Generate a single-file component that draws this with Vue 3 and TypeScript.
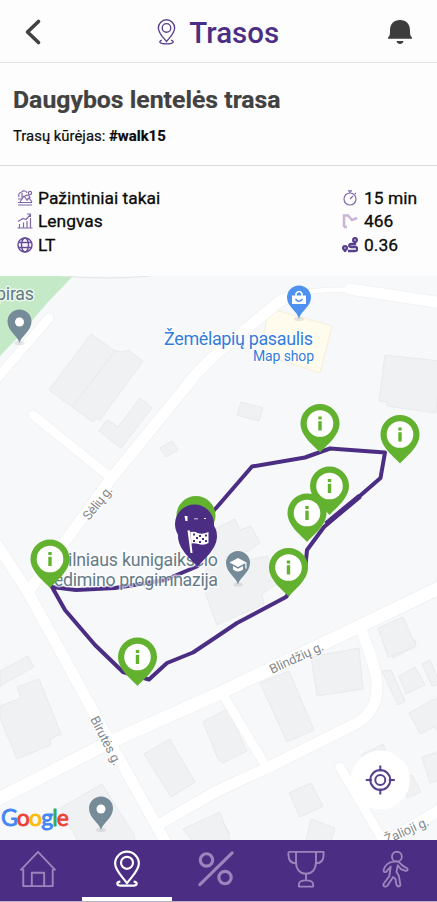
<script setup lang="ts">
interface Point { x: number; y: number }
interface Tab { name: string; active: boolean }

const stops: Point[] = [
  { x: 320, y: 452.5 },
  { x: 400, y: 463.5 },
  { x: 329.5, y: 515 },
  { x: 307, y: 542 },
  { x: 288.5, y: 596.5 },
  { x: 50, y: 588 },
  { x: 137.5, y: 686 },
]

const places: Point[] = [
  { x: 19.5, y: 343 },
  { x: 238, y: 584.5 },
  { x: 101, y: 830 },
]

const buildings: string[] = [
  '91,334 115,351 123,352 128,350 143,361 100,420 97,418 93,422 49,390',
  '140,398 152,408 121,448 99,431 107,420 118,427',
  '172,441 178,450 166,457 160,448',
  '241,402 263,408 259,421 237,415',
  '385,355 440,361 436,413 387,406 387,402 379,401',
  '0,706 21,698 17,687 39,679 61,734 50,739 51,745 17,759 0,718',
  '28,656 34,667 0,686 0,671',
  '170,739 195,782 171,797 144,754',
  '102,784 134,835 136,845 80,845 60,808',
  '203,722 227,709 247,751 223,763 218,759',
  '260,683 289,671 314,730 287,742',
  '311,657 359,648 363,689 317,696',
  '382,671 391,670 405,701 398,705',
  '399,676 415,667 425,685 406,694',
  '422,664 430,660 440,684 432,686',
  '385,645 415,640 416,646 393,658',
  '409,713 440,696 440,733 434,727 420,734',
  '422,757 440,751 440,780 430,783',
  '289,793 311,783 323,806 300,817',
  '311,819 335,828 330,845 305,845',
  '217,813 230,834 220,843 210,835',
  '361,755 383,744 387,754 369,764',
  '405,777 412,775 421,792 407,798',
  '378,628 403,617 416,646 388,657',
  '183,829 220,812 232,845 196,845',
]

const school = '217,528 235,519 240,530 251,526 260,543 250,550 227,558 230,564 267,556 283,580 262,594 264,604 217,625 200,579 213,560'

const tabs: Tab[] = [
  { name: 'home', active: false },
  { name: 'route', active: true },
  { name: 'percent', active: false },
  { name: 'trophy', active: false },
  { name: 'walk', active: false },
]
</script>

<template>
  <main class="screen">
    <header class="topbar">
      <svg class="back" viewBox="0 0 18 28"><path d="M14.5 3.5 3.5 14l11 10.500" /></svg>
      <h1 class="brand">
        <svg class="brand-pin" viewBox="0 0 28 38">
          <path d="M14 33C11 29 2 21 2 13a12 12 0 0 1 24 0c0 8-9 16-12 20z" />
          <circle cx="14" cy="13" r="6.300" />
          <path d="M7 31c-6 3-2 5.500 7 5.500s13-2.500 7-5.500" />
        </svg>
        <span>Trasos</span>
      </h1>
      <svg class="bell" viewBox="0 0 26 26">
        <path d="M1 18.500C3 17 3 15 3 11.500C3 5 7 1 13 1s10 4 10 10.500c0 3.500 0 5.500 2 7v1.300H1z" />
        <path d="M9.500 22h7c-.6 4-6.400 4-7 0z" />
      </svg>
    </header>

    <section class="heading">
      <h2>Daugybos lentelės trasa</h2>
      <p>Trasų kūrėjas: <b>#walk15</b></p>
    </section>

    <section class="facts">
      <ul>
        <li>
          <svg viewBox="0 0 16 16">
            <path d="M1 15h14M1 12.500h14M3 12 7 6l3 4 2-2 3 4M2 7c-1-3 1-5 3-5 1-2 5-1 5 1M1 9h4M5 3v5M8 6c3-2 5 0 5 2" />
            <circle cx="13" cy="3" r="1.600" />
          </svg>
          <span>Pažintiniai takai</span>
        </li>
        <li>
          <svg viewBox="0 0 16 16"><path d="M.5 15h15M2.500 15v-4M6.500 15V9.500M10 15V8M13.500 15V5M1 8.500l5-3 3 1L13 2M10 1h3.500v3" /></svg>
          <span>Lengvas</span>
        </li>
        <li>
          <svg class="strong" viewBox="0 0 16 16"><circle cx="8" cy="8" r="7" /><ellipse cx="8" cy="8" rx="3.500" ry="7" /><path d="M1.500 5.500h13M1.500 10.500h13" /></svg>
          <span>LT</span>
        </li>
      </ul>
      <ul class="numbers">
        <li>
          <svg viewBox="0 0 16 16"><circle cx="8" cy="9" r="6" /><path d="M6 .8h4M8 1v2M13 3l1 1M8 9l3-3" /></svg>
          <span>15 min</span>
        </li>
        <li>
          <svg class="pale" viewBox="0 0 16 16"><path d="M2 14V2.500h4l4 4.500 5-2M2 14h3" /></svg>
          <span>466</span>
        </li>
        <li>
          <svg class="bold" viewBox="0 0 16 16"><circle cx="3" cy="11" r="1.900" /><path d="M3 13v2" /><circle cx="13" cy="3" r="1.900" /><path d="M13 5v2H9.500c-3 0-3 3 0 3H13c3 0 3 4 0 4H6" /></svg>
          <span>0.36</span>
        </li>
      </ul>
    </section>

    <section class="map">
      <svg class="canvas" viewBox="0 276 437 564">
        <rect class="ground" x="0" y="276" width="437" height="564" />
        <path class="park" d="M0 276h73L48 302 18 337 0 356z" />
        <path class="rim" d="M60 276q50 4 90 0" />
        <polygon v-for="(b, i) in buildings" :key="i" class="building" :points="b" />
        <path class="building" d="M115 351 73 406" />
        <polygon class="building" :points="school" />
        <polygon class="shop" points="268,308 332,326 320,373 262,354" />

        <g class="roads edge">
          <path class="w9" d="M49 318-6 382M33 415 110 477M340 767 392 856M225 698 267 768" />
          <path class="w11" d="M290 297 280 301 217 353 197 373 110 480 28 592M350 289 443 303M360 626C371 657 377 671 377 687 377 704 370 716 355 724L267 768 217 791 158 825M385 842 443 808M-6 540 28 592 57 645 110 742 170 850" />
          <path class="w14" d="M-6 801 110 742 220 693 360 626 443 586" />
          <path class="w4" d="M280 301Q303 288 350 290" />
        </g>
        <g class="roads">
          <path class="w9" d="M49 318-6 382M33 415 110 477M340 767 392 856M225 698 267 768" />
          <path class="w11" d="M290 297 280 301 217 353 197 373 110 480 28 592M350 289 443 303M360 626C371 657 377 671 377 687 377 704 370 716 355 724L267 768 217 791 158 825M385 842 443 808M-6 540 28 592 57 645 110 742 170 850" />
          <path class="w14" d="M-6 801 110 742 220 693 360 626 443 586" />
          <path class="w4" d="M280 301Q303 288 350 290" />
        </g>

        <g class="street">
          <text transform="translate(89 521) rotate(-52)" textLength="39">Sėlių g.</text>
          <text transform="translate(90 719) rotate(63)" textLength="53">Birutės g.</text>
          <text transform="translate(272 674) rotate(-25)" textLength="58">Blindžių g.</text>
          <text transform="translate(387 844) rotate(-24)" textLength="47">Žalioji g.</text>
        </g>

        <path class="route" d="M52 587 76 590 115 588 165 580 198 566 205 520 217 507 252 466.500 305 457.500 330 448.500 385 452.500 380.500 478 324 527 307 550 305 570 286 597 237 623 217 636.500 193 652.500 167 663 149 679.500 123 672 95 645 65 610Z" />
        <path class="route thick" d="M360 496 326 524" />

        <g class="place-name">
          <text x="-4" y="300" textLength="38">piras</text>
          <text x="57" y="565.500" textLength="161">Vilniaus kunigaikščio</text>
          <text x="54" y="586" textLength="164">edimino progimnazija</text>
        </g>
        <g class="shop-name">
          <text x="164" y="344.500" textLength="149">Žemėlapių pasaulis</text>
          <text class="kind" x="253" y="361" textLength="61">Map shop</text>
        </g>

        <g v-for="(p, i) in places" :key="'p' + i" :transform="`translate(${p.x} ${p.y})`">
          <ellipse class="shade" cx="0" cy="0" rx="5" ry="2" />
          <path class="gray-pin" d="M0 0C-1.500-7-12-12-12-21.500a12 12 0 0 1 24 0C12-12 1.500-7 0 0z" />
          <circle v-if="i !== 1" class="white" cx="0" cy="-21" r="4.500" />
          <g v-else class="white"><path d="M-8.500-22 0-26.500 8.500-22 0-17.500z" /><path d="M-5-18.500v3.500Q0-11 5-15v-3.500L0-15.800zM7.300-22h1.200v6H7.300z" /></g>
        </g>

        <g transform="translate(299 319)">
          <ellipse class="shade" cx="0" cy="0" rx="5" ry="2" />
          <path class="blue-pin" d="M0 0C-1.500-8-12-12-12-21.500a12 12 0 0 1 24 0C12-12 1.500-8 0 0z" />
          <path class="white" d="M-7-23.500H7v8.500H-7z" />
          <path class="handle" d="M-3-23v-2.500q3-4 6 0v2.500" />
          <path class="smile" d="M-3.500-20Q0-15.500 3.500-20" />
        </g>

        <path class="stop" transform="translate(196 544)" d="M0 0C-5-7-19.500-15-19.500-28.500a19.500 19.500 0 0 1 39 0C19.500-15 5-7 0 0z" />
        <path class="flag-pin" transform="translate(194.500 553)" d="M0 0C-5-7-19.500-15-19.500-29a19.500 19.500 0 0 1 39 0C19.500-15 5-7 0 0z" />
        <path class="flag-pin" transform="translate(197.500 567)" d="M0 0C-5-7-19.500-17-19.500-31a19.500 19.500 0 0 1 39 0C19.500-17 5-7 0 0z" />
        <path class="white" d="M184.500 516h3v5h-2zM194 518.500h4v.7h-4zM204 518h2v1h-2z" />
        <path class="white" d="M187.500 530.500h2.500l2.500 22.500h-2zM190.500 532q4-1 7 1 5 2 11-1v11q-5 3-10 1-4-1-7-.5z" />
        <path class="checks" d="M193 534.500h2M199 536h2M205 535.500h2M196 538h2M202 539h2M193 541h2M199 542h2M205 541h2" />

        <g v-for="(s, i) in stops" :key="'s' + i" :transform="`translate(${s.x} ${s.y})`">
          <path class="stop" d="M0 0C-5-6-19.500-16-19.500-29a19.500 19.500 0 0 1 39 0C19.500-16 5-6 0 0z" />
          <circle class="white" cx="0" cy="-29" r="13.300" />
          <path class="info" d="M-1.700-36h3.400v3h-3.400zM-1.700-31.300h3.400v9.300h-3.400z" />
        </g>

        <g class="locate" transform="translate(380.300 780)">
          <circle class="white" r="29.500" />
          <circle r="10" /><circle r="5" />
          <path d="M0-14.500v6M0 8.500v6M-14.500 0h6M8.500 0h6" />
        </g>

        <text class="google" x="1" y="826" textLength="68"><tspan class="g-blue">G</tspan><tspan class="g-red">o</tspan><tspan class="g-yellow">o</tspan><tspan class="g-blue">g</tspan><tspan class="g-green">l</tspan><tspan class="g-red">e</tspan></text>
      </svg>
    </section>

    <nav class="tabs">
      <div v-for="t in tabs" :key="t.name" class="tab" :class="{ active: t.active }">
        <svg v-if="t.name === 'home'" viewBox="0 0 40 40"><path d="M1.500 21.500 20 2l18.500 19.500M4.500 20v18h31V20M13.500 38V24h13v14" /></svg>
        <svg v-else-if="t.name === 'route'" viewBox="0 0 40 40">
          <path d="M20 35C16 29 7.500 22 7.500 14.300a12.500 12.500 0 0 1 25 0C32.500 22 24 29 20 35z" /><circle cx="20" cy="13.500" r="6.300" />
          <path d="M13 33.300c-5 .5-3.500 4.200 0 4.200h14c3.500 0 5-3.700 0-4.200" />
        </svg>
        <svg v-else-if="t.name === 'percent'" class="heavy" viewBox="0 0 40 40"><circle cx="10" cy="10.500" r="6.500" /><circle cx="29.500" cy="29" r="6.500" /><path d="M37 3 3 36.500" /></svg>
        <svg v-else-if="t.name === 'trophy'" viewBox="0 0 40 40"><path d="M1.500 2h37v3c0 6-3 9-8 9M1.500 2v3c0 6 3 9 8 9M9.500 2v11c0 7 4 12 10.500 12s10.500-5 10.500-12V2M20 25v7M12.500 38.500h15v-2c0-3-3-4.500-7.500-4.500s-7.500 1.500-7.500 4.500z" /></svg>
        <svg v-else viewBox="0 0 40 40">
          <circle cx="22" cy="7" r="5.200" />
          <path d="M18 12.500C14 12.500 9 16 8 21c0 3 3 3 4 .5l3.500-4L14 27.500l-6 8c-1 3 2 4 4 2l6-9 2.500 2 1 6c1 3 5 2 4-1L24 27l-2.500-4L23 16l3 4 5 2c3 0 3-3 .5-3.500l-3.500-2-4-4c-2-1-4-.5-6 0z" />
        </svg>
      </div>
    </nav>
  </main>
</template>

<style>
body { margin: 0; background: #fff; overflow: hidden; }
</style>

<style scoped>
.screen { width: 437px; height: 902px; display: flex; flex-direction: column; overflow: hidden; background: #fdfdfd; color: #0b0b0b; font-family: Roboto, "Liberation Sans", sans-serif; }
h1, h2, p, ul { margin: 0; padding: 0; }
svg { display: block; fill: none; flex: none; }

.topbar { box-sizing: border-box; height: 63px; flex: none; display: flex; align-items: center; justify-content: space-between; padding: 2px 23.500px 0 24px; border-bottom: 1.500px solid #e2e2e2; }
.back { width: 18px; height: 28px; stroke: #424242; stroke-width: 3.600; stroke-linecap: round; stroke-linejoin: round; }
.brand { display: flex; align-items: center; gap: 13px; margin-left: 7px; color: #4b2e83; font-size: 29.500px; line-height: 36px; font-weight: 500; }
.brand span { padding-top: 2px; }
.brand-pin { width: 19px; height: 26px; stroke: #59408d; stroke-width: 2; }
.bell { width: 26px; height: 26px; fill: #3d3d3d; }

.heading { box-sizing: border-box; height: 103px; flex: none; padding: 21px 13px 0; border-bottom: 1px solid #d9d9d9; }
h2 { font-size: 24.800px; line-height: 32px; font-weight: 700; color: #424242; -webkit-text-stroke: .2px; }
.heading p { margin-top: 10px; font-size: 14.900px; line-height: 20px; -webkit-text-stroke: .2px; }

.facts { box-sizing: border-box; height: 110px; flex: none; display: flex; justify-content: space-between; padding: 20px 20px 0 17px; }
ul { list-style: none; }
li { display: flex; align-items: center; gap: 5px; height: 23.500px; font-size: 17.400px; -webkit-text-stroke: .3px; }
.numbers li { gap: 6px; }
li svg { width: 16px; height: 16px; stroke: #8069ab; stroke-width: 1.200; }
li .strong { stroke: #674c9b; stroke-width: 1.500; }
li .pale { stroke: #c9b5d7; stroke-width: 2.500; }
li .bold { stroke: #59408d; stroke-width: 2.300; }

.map { height: 564px; flex: none; }
.canvas { width: 437px; height: 564px; }
.ground { fill: #f7f8fa; }
.park { fill: #c3e9c6; }
.rim { stroke: #e2e4e6; }
.building { fill: #f0f1f3; stroke: #e9eaed; stroke-width: 1; }
.shop { fill: #fffbed; stroke: #f6efd7; }
.roads path { stroke: #fff; stroke-linecap: round; stroke-linejoin: round; }
.roads .w4 { stroke-width: 4.500; }
.roads .w9 { stroke-width: 9; }
.roads .w11 { stroke-width: 11; }
.roads .w14 { stroke-width: 13; }
.roads.edge path { stroke: #eff0f2; }
.roads.edge .w4 { stroke-width: 6; }
.roads.edge .w9 { stroke-width: 10.500; }
.roads.edge .w11 { stroke-width: 12.500; }
.roads.edge .w14 { stroke-width: 14.500; }
.route { stroke: #4b2e83; stroke-width: 4; stroke-linejoin: round; }
.route.thick { stroke-width: 5.500; }
text { paint-order: stroke; stroke-linejoin: round; }
.street { fill: #85888c; stroke: #fff; stroke-width: 2px; font-size: 13px; }
.place-name { fill: #647b87; stroke: rgba(255, 255, 255, .65); stroke-width: 3px; font-size: 17.800px; }
.shop-name { fill: #347cdb; stroke: #fff; stroke-width: 2px; font-size: 18px; }
.kind { font-size: 14px; }
.shade { fill: rgba(90, 100, 110, .14); }
.gray-pin { fill: #758b98; }
.blue-pin { fill: #4f91ee; }
.white { fill: #fff; }
.handle { stroke: #fff; stroke-width: 1.500; }
.smile { stroke: #4f91ee; stroke-width: 1.500; }
.stop, .info { fill: #62b22f; }
.flag-pin { fill: #4b2e83; }
.checks { stroke: #4b2e83; stroke-width: 2; }
.locate { stroke: #59408f; stroke-width: 2; }
.locate .white { stroke: none; }
.google { font-size: 23px; font-family: Lato, sans-serif; stroke-width: .8px; paint-order: normal; }
.g-blue { fill: #4285f4; stroke: #4285f4; }
.g-red { fill: #ea4335; stroke: #ea4335; }
.g-yellow { fill: #fbbc05; stroke: #fbbc05; }
.g-green { fill: #34a853; stroke: #34a853; }

.tabs { box-sizing: border-box; height: 62px; flex: none; display: grid; grid-template-columns: repeat(5, 1fr); margin: 0 -3px 0 -7px; background: #4b2e83; border-bottom: 1px solid #b9afcb; }
.tab { box-sizing: border-box; display: flex; justify-content: center; padding-top: 10px; }
.tab svg { width: 38px; height: 38px; stroke: #9e83bd; stroke-width: 2; stroke-linejoin: round; }
.tab .heavy { stroke-width: 3.300; stroke-linecap: round; }
.active { border-bottom: 4px solid #fff; }
.tab.active svg { stroke: #fff; stroke-width: 2.300; }
</style>
